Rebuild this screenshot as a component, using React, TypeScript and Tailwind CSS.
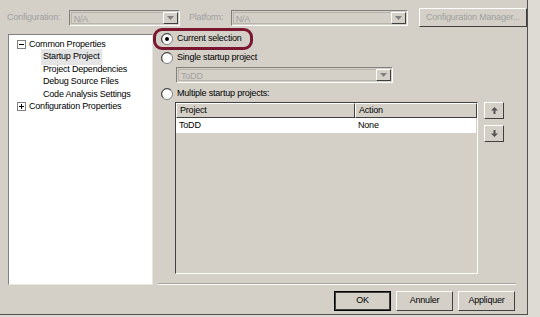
import React from 'react'

const font = { fontFamily: '"Liberation Sans", Arial, sans-serif', letterSpacing: '-0.2px' }

function Radio({ checked }: { checked?: boolean }) {
  return (
    <svg width="12" height="12" viewBox="0 0 12 12" className="shrink-0">
      <circle cx="6" cy="6" r="5.5" fill="#ffffff" stroke="#808080" />
      <path d="M2.2 9.8 A5.3 5.3 0 0 1 9.8 2.2" fill="none" stroke="#404040" strokeWidth="1" />
      {checked && <circle cx="6" cy="6" r="2" fill="#000000" />}
    </svg>
  )
}

function DropArrow({ disabled }: { disabled?: boolean }) {
  return (
    <div className="w-[15px] h-full bg-[#d4d0c8] border border-t-white border-l-white border-r-[#404040] border-b-[#404040] flex items-center justify-center">
      <svg width="7" height="4" viewBox="0 0 7 4">
        <path d="M0 0 H7 L3.5 4 Z" fill={disabled ? '#808080' : '#000'} />
      </svg>
    </div>
  )
}

function Combo({ value, width }: { value: string; width: string }) {
  return (
    <div className={`${width} h-[16px] flex items-stretch bg-[#d4d0c8] border border-t-[#808080] border-l-[#808080] border-r-white border-b-white p-[1px]`}>
      <div className="flex-1 text-[9px] leading-[12px] text-[#a0a0a0] pl-[2px] border border-[#b8b4ac] border-r-0">{value}</div>
      <DropArrow disabled />
    </div>
  )
}

function Button({ label, def, w }: { label: string; def?: boolean; w: string }) {
  return (
    <div className={`${w} h-[20px] flex items-center justify-center text-[9px] text-black bg-[#d4d0c8] border ${def ? 'border-black outline outline-1 outline-[#404040] -outline-offset-2' : 'border-t-white border-l-white border-r-[#404040] border-b-[#404040]'}`}>
      {label}
    </div>
  )
}

function Arrow({ up }: { up?: boolean }) {
  return (
    <div className="w-[20px] h-[17px] bg-[#d4d0c8] border border-t-white border-l-white border-r-[#404040] border-b-[#404040] flex items-center justify-center">
      <svg width="7" height="7" viewBox="0 0 7 7">
        {up ? (
          <path d="M3.5 0 L7 3.5 H4.5 V7 H2.5 V3.5 H0 Z" fill="#555" />
        ) : (
          <path d="M3.5 7 L7 3.5 H4.5 V0 H2.5 V3.5 H0 Z" fill="#555" />
        )}
      </svg>
    </div>
  )
}

function TreeBox({ plus }: { plus?: boolean }) {
  return (
    <div className="w-[9px] h-[9px] border border-[#808080] bg-white flex items-center justify-center relative shrink-0">
      <div className="w-[5px] h-[1px] bg-black" />
      {plus && <div className="absolute w-[1px] h-[5px] bg-black" />}
    </div>
  )
}

export default function App() {
  return (
    <div className="w-[540px] h-[317px] bg-[#dedbd4] overflow-hidden whitespace-nowrap" style={font}>
      <div className="w-[528px] h-[315px] bg-[#d4d0c8] border-r border-b border-[#505050] flex flex-col">
        {/* top bar */}
        <div className="flex items-center h-[34px] pt-[1px]">
          <span className="text-[9px] text-[#a0a0a0] ml-[7px] w-[62px]">Configuration:</span>
          <Combo value="N/A" width="w-[112px]" />
          <span className="text-[9px] text-[#a0a0a0] ml-[9px] w-[42px]">Platform:</span>
          <Combo value="N/A" width="w-[178px]" />
          <div className="ml-[11px] w-[109px] h-[19px] flex items-center justify-center text-[9px] text-[#a0a0a0] border border-t-white border-l-white border-r-[#404040] border-b-[#404040]">
            Configuration Manager...
          </div>
        </div>

        <div className="flex flex-1">
          {/* tree */}
          <div className="ml-[8px] w-[145px] h-[251px] bg-white border border-t-[#808080] border-l-[#808080] border-r-[#e8e6e0] border-b-[#e8e6e0] text-[9px] text-black pt-[3px]">
            <div className="flex items-center h-[12.5px] pl-[8px] gap-[3px]">
              <TreeBox />
              <span>Common Properties</span>
            </div>
            <div className="pl-[32px]">
              <div className="h-[12.5px] flex items-center"><span className="bg-[#e4e4e4] px-[2px] py-[1px]">Startup Project</span></div>
              <div className="h-[12.5px] flex items-center px-[2px]">Project Dependencies</div>
              <div className="h-[12.5px] flex items-center px-[2px]">Debug Source Files</div>
              <div className="h-[12.5px] flex items-center px-[2px]">Code Analysis Settings</div>
            </div>
            <div className="flex items-center h-[12.5px] pl-[8px] gap-[3px]">
              <TreeBox plus />
              <span>Configuration Properties</span>
            </div>
          </div>

          {/* right panel */}
          <div className="flex flex-col w-[368px] -mt-[6px]">
            <div className="flex items-center gap-[4px] w-[100px] h-[22px] border-[3px] border-[#7b1630] rounded-[9px] pl-[5px] text-[9px] text-black">
              <Radio checked />
              <span>Current selection</span>
            </div>
            <div className="flex items-center gap-[4px] ml-[8px] mt-[2px] h-[12px] text-[9px] text-black">
              <Radio />
              <span>Single startup project</span>
            </div>
            <div className="ml-[23px] mt-[3px]">
              <Combo value="ToDD" width="w-[217px]" />
            </div>
            <div className="flex items-center gap-[4px] ml-[8px] mt-[5px] h-[12px] text-[9px] text-black">
              <Radio />
              <span>Multiple startup projects:</span>
            </div>
            <div className="flex mt-[2px] ml-[22px]">
              <div className="w-[303px] h-[172px] border border-t-[#404040] border-l-[#404040] border-r-white border-b-white bg-[#d4d0c8] text-[9px] text-black">
                <div className="flex h-[15px]">
                  <div className="w-[179px] pl-[3px] border border-t-white border-l-white border-r-[#404040] border-b-[#404040] flex items-center">Project</div>
                  <div className="flex-1 pl-[3px] border border-t-white border-l-white border-r-[#404040] border-b-[#404040] flex items-center">Action</div>
                </div>
                <div className="flex h-[15px] bg-white w-[300px]">
                  <div className="w-[179px] pl-[3px] flex items-center">ToDD</div>
                  <div className="flex-1 pl-[3px] flex items-center">None</div>
                </div>
              </div>
              <div className="flex flex-col gap-[6px] ml-[6px]">
                <Arrow up />
                <Arrow />
              </div>
            </div>
            <div className="ml-[5px] mt-[9px] w-[358px] h-[2px] border-t border-[#a8a498] border-b border-b-white" />
            <div className="flex justify-end gap-[5px] mt-[6px] mr-[6px]">
              <Button label="OK" def w="w-[57px]" />
              <Button label="Annuler" w="w-[57px]" />
              <Button label="Appliquer" w="w-[57px]" />
            </div>
          </div>
        </div>
      </div>
    </div>
  )
}
